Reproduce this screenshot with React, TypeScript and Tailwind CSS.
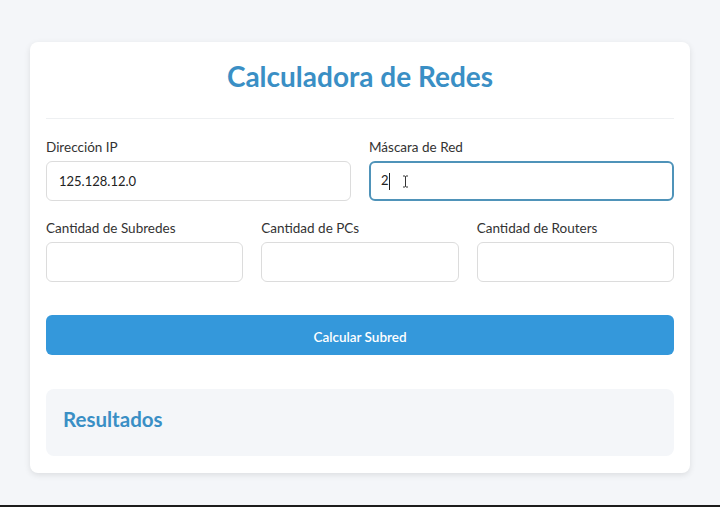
import { useState } from "react";

const font = { fontFamily: "Lato, 'Open Sans', sans-serif" };

function Field({ label, children }: { label: string; children: React.ReactNode }) {
  return (
    <div className="flex flex-col">
      <label className="text-[13.5px] leading-[18px] text-[#333] mb-[5px]">{label}</label>
      {children}
    </div>
  );
}

const inputCls =
  "h-10 w-full rounded-md border border-[#dcdcdc] bg-white px-3 text-[13px] text-[#222] outline-none";

export default function App() {
  const [ip, setIp] = useState("125.128.12.0");

  return (
    <div className="min-h-[507px] bg-[#f4f6f9] pt-[42px] border-b-2 border-[#1c1c1c] box-border" style={font}>
      <div className="mx-[30px] rounded-lg bg-white shadow-[0_2px_6px_rgba(0,0,0,0.1)] px-4 pt-4 pb-[17px]">
        {/* Header */}
        <div className="pt-[2px] pb-[25px] border-b border-[#eef0f2]">
          <h1 className="text-center text-[28px] leading-[33px] font-bold text-[#3a8fc5]">Calculadora de Redes</h1>
        </div>

        {/* Form */}
        <div className="mt-[19px] grid grid-cols-2 gap-[18px]">
          <Field label="Dirección IP">
            <input className={inputCls} value={ip} onChange={(e) => setIp(e.target.value)} />
          </Field>
          <Field label="Máscara de Red">
            <div className="relative h-10 w-full rounded-md border-2 border-[#4f93b9] bg-white px-[10px] flex items-center text-[13px] text-[#222]">
              <span>2</span>
              <span className="inline-block h-[17px] w-px bg-[#222]" />
              {/* mouse I-beam */}
              <svg className="absolute left-[31px] top-[12px]" width="7" height="13" viewBox="0 0 7 13">
                <path d="M1 1h2l.5.5L4 1h2M3.5 1.5v10M1 12h2l.5-.5.5.5h2" stroke="#333" strokeWidth="1" fill="none" />
              </svg>
            </div>
          </Field>
        </div>

        <div className="mt-[18px] grid grid-cols-3 gap-[18px]">
          <Field label="Cantidad de Subredes">
            <input className={inputCls} />
          </Field>
          <Field label="Cantidad de PCs">
            <input className={inputCls} />
          </Field>
          <Field label="Cantidad de Routers">
            <input className={inputCls} />
          </Field>
        </div>

        <button className="mt-[33px] h-10 w-full rounded-md bg-[#3498db] pt-[4px] text-[13.5px] font-semibold text-white">
          Calcular Subred
        </button>

        {/* Results */}
        <div className="mt-[34px] h-[67px] rounded-lg bg-[#f4f6f9] px-[17px] pt-4">
          <h2 className="text-[20.5px] leading-7 font-bold text-[#3a8fc5]">Resultados</h2>
        </div>
      </div>
    </div>
  );
}
